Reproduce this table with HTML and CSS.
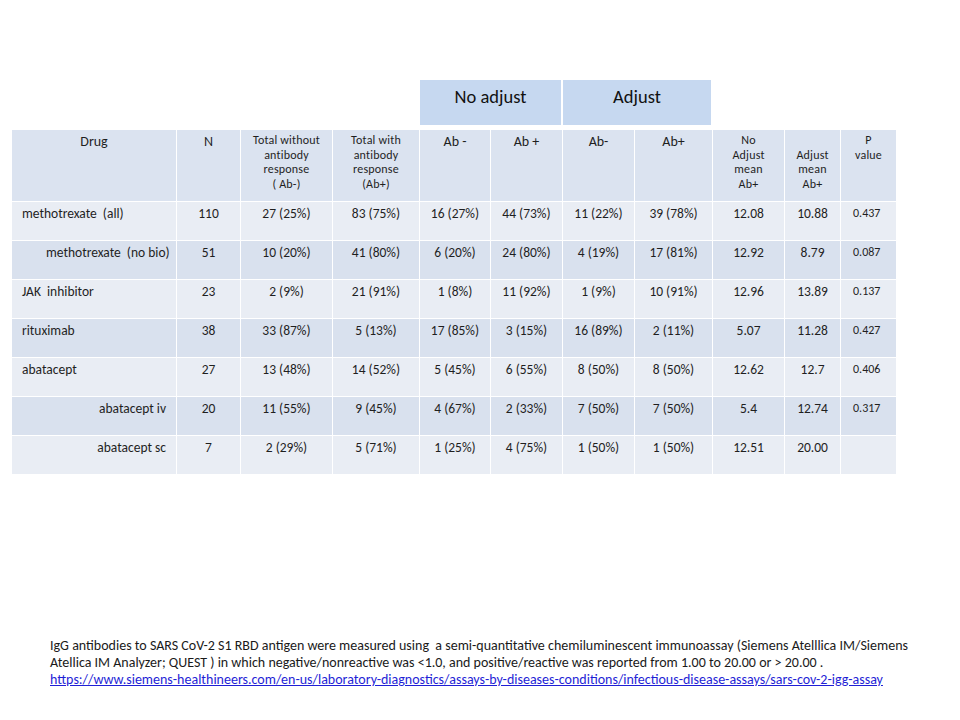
FILE: index.html
```html
<!DOCTYPE html>
<html>
<head>
<meta charset="utf-8">
<link rel="stylesheet" href="styles.css">
</head>
<body>
<div class="slide">
  <table class="data">
    <colgroup>
      <col class="c-drug"><col class="c-n"><col class="c-tw"><col class="c-tp">
      <col class="c-a1"><col class="c-a2"><col class="c-a3"><col class="c-a4">
      <col class="c-m1"><col class="c-m2"><col class="c-p">
    </colgroup>
    <thead>
      <tr class="group">
        <th class="blank" colspan="4"></th>
        <th class="grp" colspan="2">No adjust</th>
        <th class="grp" colspan="2">Adjust</th>
        <th class="blank" colspan="3"></th>
      </tr>
      <tr class="gap"><td colspan="11"></td></tr>
      <tr class="head">
        <th class="big">Drug</th>
        <th class="big">N</th>
        <th class="small">Total without<br>antibody<br>response<br>( Ab-)</th>
        <th class="small">Total with<br>antibody<br>response<br>(Ab+)</th>
        <th class="big">Ab -</th>
        <th class="big">Ab +</th>
        <th class="big">Ab-</th>
        <th class="big">Ab+</th>
        <th class="small">No<br>Adjust<br>mean<br>Ab+</th>
        <th class="small"><br>Adjust<br>mean<br>Ab+</th>
        <th class="small">P<br>value</th>
      </tr>
    </thead>
    <tbody>
      <tr class="odd"><td class="drug">methotrexate&nbsp; (all)</td><td>110</td><td>27 (25%)</td><td>83 (75%)</td><td>16 (27%)</td><td>44 (73%)</td><td>11 (22%)</td><td>39 (78%)</td><td>12.08</td><td>10.88</td><td class="p">0.437</td></tr>
      <tr class="even"><td class="drug indent">methotrexate&nbsp; (no bio)</td><td>51</td><td>10 (20%)</td><td>41 (80%)</td><td>6 (20%)</td><td>24 (80%)</td><td>4 (19%)</td><td>17 (81%)</td><td>12.92</td><td>8.79</td><td class="p">0.087</td></tr>
      <tr class="odd"><td class="drug">JAK&nbsp; inhibitor</td><td>23</td><td>2 (9%)</td><td>21 (91%)</td><td>1 (8%)</td><td>11 (92%)</td><td>1 (9%)</td><td>10 (91%)</td><td>12.96</td><td>13.89</td><td class="p">0.137</td></tr>
      <tr class="even"><td class="drug">rituximab</td><td>38</td><td>33 (87%)</td><td>5 (13%)</td><td>17 (85%)</td><td>3 (15%)</td><td>16 (89%)</td><td>2 (11%)</td><td>5.07</td><td>11.28</td><td class="p">0.427</td></tr>
      <tr class="odd"><td class="drug">abatacept</td><td>27</td><td>13 (48%)</td><td>14 (52%)</td><td>5 (45%)</td><td>6 (55%)</td><td>8 (50%)</td><td>8 (50%)</td><td>12.62</td><td>12.7</td><td class="p">0.406</td></tr>
      <tr class="even"><td class="drug right">abatacept iv</td><td>20</td><td>11 (55%)</td><td>9 (45%)</td><td>4 (67%)</td><td>2 (33%)</td><td>7 (50%)</td><td>7 (50%)</td><td>5.4</td><td>12.74</td><td class="p">0.317</td></tr>
      <tr class="odd"><td class="drug right">abatacept sc</td><td>7</td><td>2 (29%)</td><td>5 (71%)</td><td>1 (25%)</td><td>4 (75%)</td><td>1 (50%)</td><td>1 (50%)</td><td>12.51</td><td>20.00</td><td class="p"></td></tr>
    </tbody>
  </table>

  <div class="note">
    <div class="line justify">IgG antibodies to SARS CoV-2 S1 RBD antigen were measured using&nbsp; a semi-quantitative chemiluminescent immunoassay (Siemens Atelllica IM/Siemens</div>
    <div class="line">Atellica IM Analyzer; QUEST ) in which negative/nonreactive was &lt;1.0, and positive/reactive was reported from 1.00 to 20.00 or &gt; 20.00 .</div>
    <div class="line"><a href="#">https://www.siemens-healthineers.com/en-us/laboratory-diagnostics/assays-by-diseases-conditions/infectious-disease-assays/sars-cov-2-igg-assay</a></div>
  </div>
</div>
</body>
</html>
```

FILE: styles.css
```css
* { box-sizing: border-box; }
html, body { margin: 0; padding: 0; background: #ffffff; }
body {
  font-family: "Carlito", "Lato", "Liberation Sans", sans-serif;
  color: #1f1f1f;
}
.slide {
  width: 960px;
  height: 720px;
  padding: 80px 0 0 12px;
  display: flex;
  flex-direction: column;
}
.data {
  border-collapse: separate;
  border-spacing: 0;
  table-layout: fixed;
  width: 884px;
}
.c-drug { width: 165px; }
.c-n { width: 64px; }
.c-tw { width: 92px; }
.c-tp { width: 87px; }
.c-a1 { width: 71px; }
.c-a2 { width: 72px; }
.c-a3 { width: 72px; }
.c-a4 { width: 78px; }
.c-m1 { width: 72px; }
.c-m2 { width: 56px; }
.c-p { width: 55px; }

.data th, .data td {
  padding: 0;
  font-weight: normal;
  text-align: center;
  vertical-align: top;
  border-right: 1px solid #ffffff;
  border-bottom: 1px solid #ffffff;
}
.data th:last-child, .data td:last-child { border-right: none; }

.group th { height: 45px; border-bottom: none; }
.group .blank { background: transparent; }
.group .grp {
  background: #c6d8f0;
  font-size: 18.5px;
  line-height: 22px;
  padding-top: 6px;
  color: #111;
  border-right: 2px solid #ffffff;
}
.gap td { height: 5px; border: none; padding: 0; }

.head th {
  background: #dbe3f0;
  height: 72px;
  border-bottom: 1px solid #ffffff;
}
.head .big { font-size: 14px; padding-top: 3px; line-height: 17px; }
.head .small { font-size: 12px; padding-top: 3px; line-height: 14.5px; letter-spacing: 0.2px; }

.data tbody td {
  height: 39px;
  font-size: 13.5px;
  line-height: 16px;
  padding-top: 4px;
}
.data tbody tr.odd td { background: #e9edf4; }
.data tbody tr.even td { background: #d9e1ee; }
.data tbody td.drug { text-align: left; padding-left: 10px; }
.data tbody td.indent { padding-left: 34px; }
.data tbody td.right { text-align: right; padding-right: 10px; }
.data tbody td.p { font-size: 12px; padding-top: 3px; padding-left: 12px; text-align: left; }

.note {
  margin-top: 162px;
  margin-left: 38px;
  width: 858px;
  font-size: 14px;
  line-height: 17px;
  color: #1a1a1a;
}
.note .line { white-space: nowrap; }
.note .justify { white-space: normal; text-align: justify; text-align-last: justify; }
.note a { color: #1f1fd6; text-decoration: underline; }
```
